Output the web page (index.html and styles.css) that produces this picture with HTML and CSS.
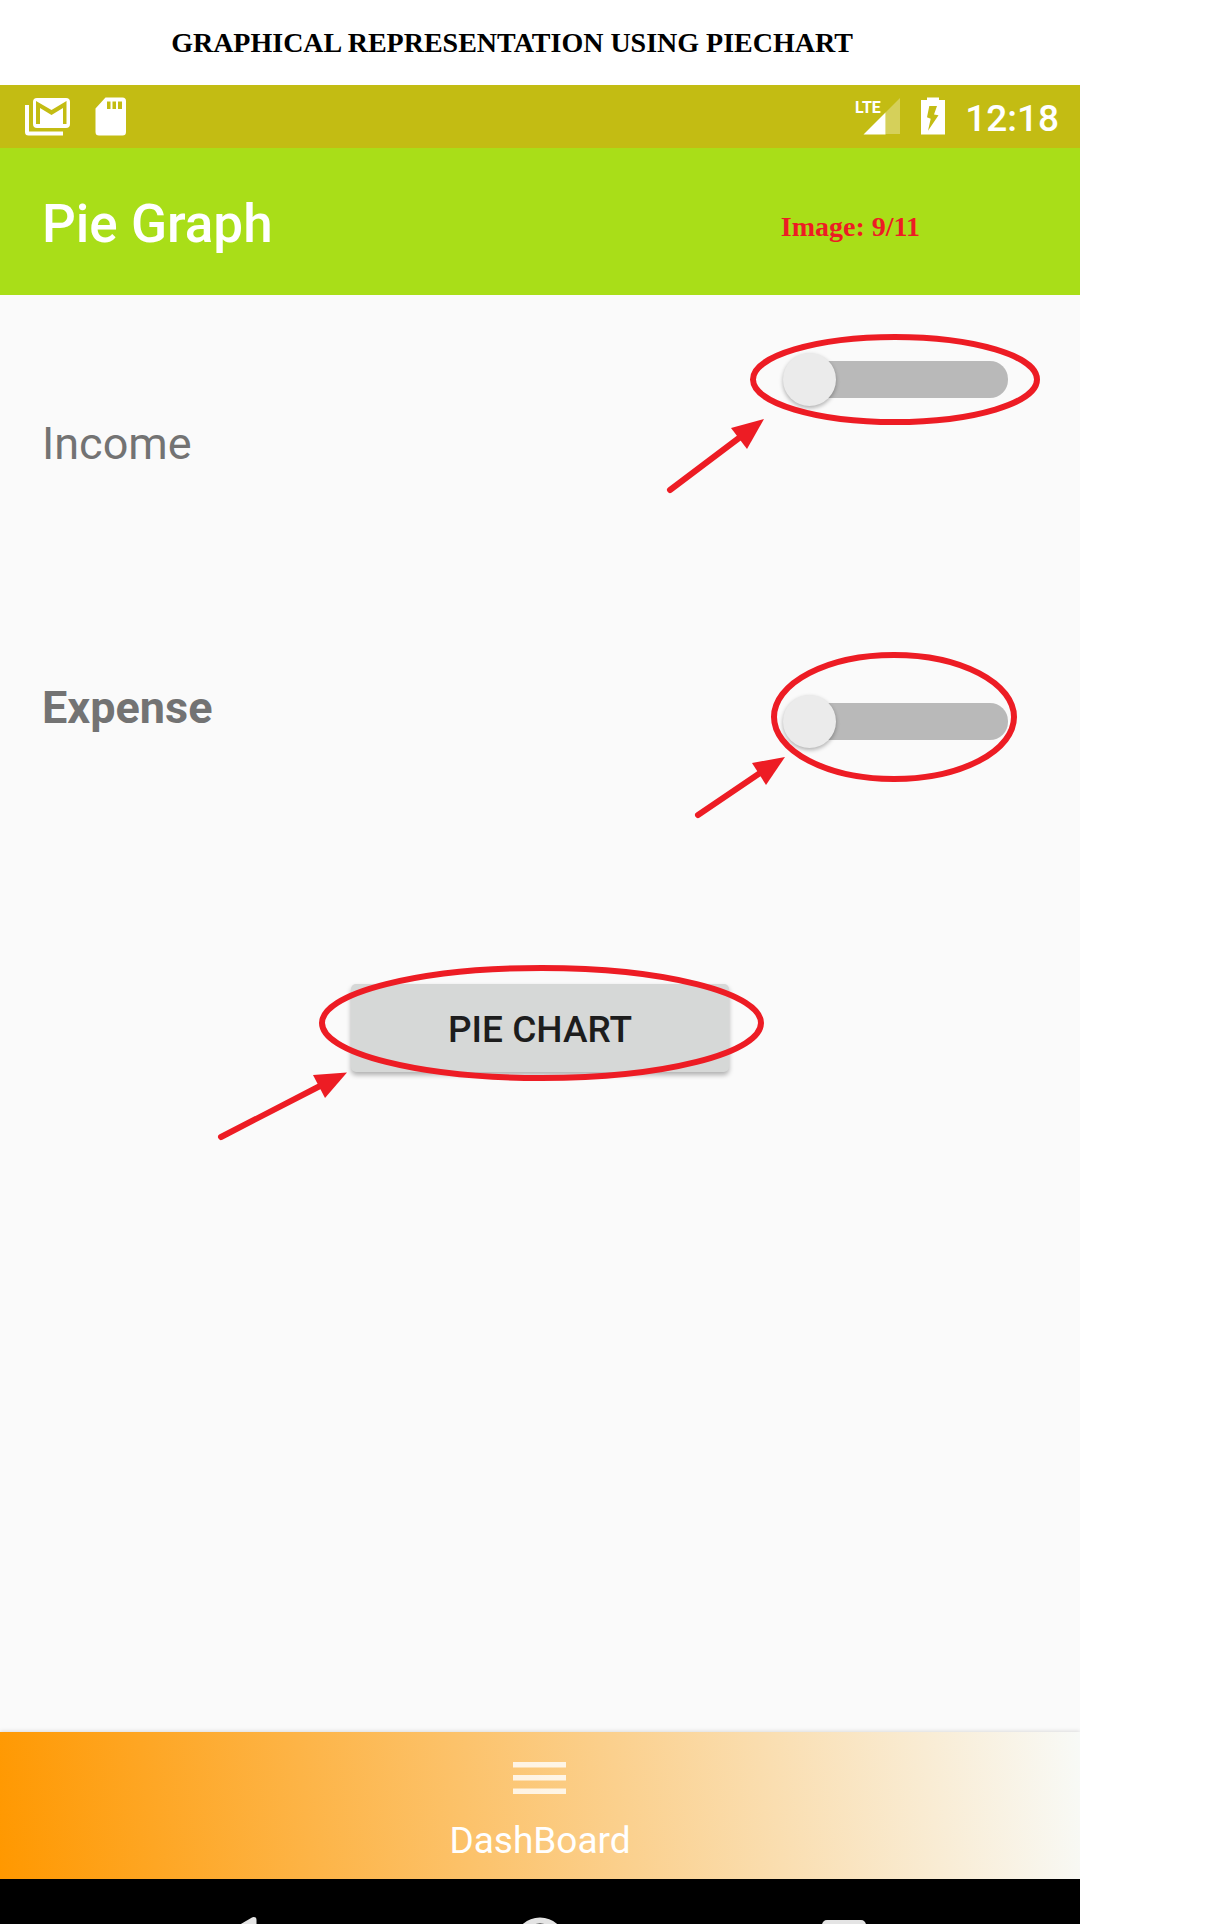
FILE: index.html
```html
<!DOCTYPE html>
<html lang="en">
<head>
<meta charset="utf-8">
<meta name="viewport" content="width=device-width, initial-scale=1">
<title>Pie Graph</title>
<link rel="stylesheet" href="styles.css">
</head>
<body>
<div class="page">
  <h1 class="page-title">GRAPHICAL REPRESENTATION USING PIECHART</h1>

  <div class="status-bar">
    <div class="notifications">
      <svg width="46" height="40" viewBox="0 0 46 40" aria-hidden="true">
        <path d="M0 8h4v26.500h34v4H3.500a3.500 3.500 0 0 1-3.500-3.500z" fill="#fff"/>
        <path fill-rule="evenodd" fill="#fff" d="M12 1h29a4 4 0 0 1 4 4v22a4 4 0 0 1-4 4h-29a4 4 0 0 1-4-4V5a4 4 0 0 1 4-4zM11 4v23h4V11l11.500 7L38 11v16h3.500V4L26.500 13z"/>
      </svg>
      <svg width="32" height="40" viewBox="0 0 32 40" aria-hidden="true">
        <path fill-rule="evenodd" fill="#fff" d="M10.500 0.500H27.500a3.500 3.500 0 0 1 3.500 3.500V35a3.500 3.500 0 0 1-3.500 3.500H4a3.500 3.500 0 0 1-3.500-3.500V11.500zM12 4.500v7.500h3.500V4.500zM17.500 4.500v7.500h3.500V4.500zM23 4.500v7.500h4V4.500z"/>
      </svg>
    </div>
    <div class="system-status">
      <svg width="46" height="40" viewBox="0 0 46 40" role="img" aria-label="LTE signal">
        <path d="M45 1v36H30.500V15.500z" fill="#fff" opacity=".3"/>
        <path d="M8.500 37.500L30.500 15.500V37.500z" fill="#fff"/>
        <text class="signal-text" x="0" y="16">LTE</text>
      </svg>
      <svg width="24" height="40" viewBox="0 0 24 40" aria-hidden="true">
        <path fill-rule="evenodd" fill="#fff" d="M6 0.500H18V3H24V37.500H0V3H6zM8.300 9L6 20.300L9.700 21.700L7 33.700L17.500 18.300L13 17.500L16 9z"/>
      </svg>
      <span class="clock">12:18</span>
    </div>
  </div>

  <header class="app-bar">
    <h2 class="app-title">Pie Graph</h2>
    <span class="image-count">Image: 9/11</span>
  </header>

  <main class="content">
    <div class="row">
      <label class="row-label" for="income">Income</label>
      <div class="switch-box">
        <input class="switch" type="checkbox" role="switch" id="income">
        <svg class="mark mark-income" width="390" height="170" viewBox="660 330 390 170" aria-hidden="true">
          <ellipse cx="895" cy="379.500" rx="142" ry="42.500"/>
          <path class="shaft" d="M670 490L739 438"/>
          <path class="head" d="M764 419L731 428L747 449z"/>
        </svg>
      </div>
    </div>
    <div class="row row-expense">
      <label class="row-label" for="expense">Expense</label>
      <div class="switch-box">
        <input class="switch" type="checkbox" role="switch" id="expense">
        <svg class="mark mark-expense" width="390" height="190" viewBox="660 645 390 190" aria-hidden="true">
          <ellipse cx="894" cy="717" rx="120" ry="62"/>
          <path class="shaft" d="M698 815L760 773"/>
          <path class="head" d="M785 757L752 763L766 785z"/>
        </svg>
      </div>
    </div>
    <div class="action">
      <button class="chart-button" type="button">PIE CHART</button>
      <svg class="mark mark-button" width="570" height="190" viewBox="210 960 570 190" aria-hidden="true">
        <ellipse cx="541.500" cy="1023" rx="219.500" ry="55"/>
        <path class="shaft" d="M221 1137L320 1086"/>
        <path class="head" d="M347 1072.500L313 1075L325 1098z"/>
      </svg>
    </div>
  </main>

  <nav class="bottom-bar">
    <a class="tab" href="#dashboard">
      <svg width="54" height="33" viewBox="0 0 54 33" aria-hidden="true">
        <path d="M0 0h53v5.500H0zM0 13h53v5.500H0zM0 26.500h53v5.500H0z" fill="#fff" opacity=".8"/>
      </svg>
      <span>DashBoard</span>
    </a>
  </nav>

  <div class="system-nav">
    <button class="key" type="button" aria-label="Back">
      <svg width="54" height="54" viewBox="0 0 54 54"><path d="M44.500 3L4 27L44.500 51z" fill="none" stroke="#e4e4e4" stroke-width="6" stroke-linejoin="round"/></svg>
    </button>
    <button class="key" type="button" aria-label="Home">
      <svg width="54" height="54" viewBox="0 0 54 54"><circle cx="27" cy="26.500" r="23" fill="none" stroke="#e4e4e4" stroke-width="6"/></svg>
    </button>
    <button class="key" type="button" aria-label="Recent apps">
      <svg width="54" height="54" viewBox="0 0 54 54"><rect x="8" y="6" width="38" height="38" rx="2" fill="none" stroke="#e4e4e4" stroke-width="6"/></svg>
    </button>
  </div>
</div>
</body>
</html>
```
FILE: styles.css
```css
* {
  box-sizing: border-box;
}

body {
  margin: 0;
  background: #fff;
  font-family: Roboto, "Liberation Sans", sans-serif;
}

.page {
  display: flex;
  flex-direction: column;
  max-width: 1080px;
  min-height: 100vh;
  overflow: hidden;
}

.page-title {
  margin: 0;
  padding: 0 56px 0 0;
  font: bold 28px/85px "Liberation Serif", serif;
  text-align: center;
  color: #000;
}

.status-bar {
  display: flex;
  align-items: center;
  justify-content: space-between;
  height: 63px;
  padding: 0 21px 0 25px;
  background: #c3bc13;
}

.notifications {
  display: flex;
  align-items: center;
  gap: 24px;
}

.system-status {
  display: flex;
  align-items: center;
  gap: 20px;
}

.signal-text {
  font: bold 16px Roboto, "Liberation Sans", sans-serif;
  fill: #fff;
}

.clock {
  padding-top: 4px;
  font-size: 37px;
  line-height: 44px;
  font-weight: 500;
  color: #fff;
}

.app-bar {
  display: flex;
  align-items: center;
  justify-content: space-between;
  height: 147px;
  padding: 4px 160px 0 42px;
  background: #a9de18;
}

.app-title {
  margin: 0;
  font-size: 53px;
  font-weight: 500;
  color: #fff;
}

.image-count {
  padding-top: 6px;
  font: bold 28px "Liberation Serif", serif;
  color: #ed1c24;
}

.content {
  flex: 1;
  padding-top: 58px;
  background: #fafafa;
}

.row {
  display: flex;
  align-items: flex-start;
  justify-content: space-between;
  padding: 0 72px 0 42px;
}

.row-label {
  padding-top: 64px;
  font-size: 45px;
  line-height: 53px;
  color: #737373;
}

.row-expense {
  margin-top: 211px;
}

.row-expense .row-label {
  padding-top: 0;
  font-weight: bold;
}

.row-expense .switch-box {
  margin-top: 14px;
}

.switch-box {
  position: relative;
  width: 225px;
  height: 53px;
}

.switch {
  appearance: none;
  display: flex;
  align-items: center;
  width: 100%;
  height: 100%;
  margin: 0;
  padding-left: 8px;
}

.switch::before {
  content: "";
  flex: 1;
  height: 37px;
  border-radius: 18px;
  background: #b9b9b9;
}

.switch::after {
  content: "";
  position: absolute;
  top: 0;
  left: 0;
  width: 53px;
  height: 53px;
  border-radius: 50%;
  background: #ebebeb;
  box-shadow: 0 2px 4px rgba(0, 0, 0, .3);
}

.switch:checked::after {
  left: auto;
  right: 0;
}

.mark {
  position: absolute;
  pointer-events: none;
  fill: none;
  stroke: #ed1c24;
  stroke-width: 6px;
}

.mark .shaft {
  stroke-linecap: round;
}

.mark .head {
  fill: #ed1c24;
  stroke: none;
}

.mark-income {
  left: -123px;
  top: -23px;
}

.mark-expense {
  left: -123px;
  top: -50px;
}

.mark-button {
  left: -141px;
  top: -24px;
}

.action {
  position: relative;
  width: 378px;
  margin: 236px auto 0;
}

.chart-button {
  display: block;
  width: 100%;
  height: 88px;
  padding: 2px 0 0;
  border: 0;
  border-radius: 5px;
  background: #d6d8d7;
  box-shadow: 0 3px 5px rgba(0, 0, 0, .3);
  font: 500 37px Roboto, sans-serif;
  color: #1d1d1d;
}

.bottom-bar {
  display: flex;
  justify-content: center;
  height: 147px;
  background: linear-gradient(83deg, #ff9800, #f8faf7);
  box-shadow: 0 -1px 4px rgba(0, 0, 0, .12);
}

.tab {
  display: flex;
  flex-direction: column;
  align-items: center;
  gap: 24px;
  padding-top: 30px;
  font-size: 37px;
  line-height: 44px;
  color: #fff;
  text-decoration: none;
}

.system-nav {
  position: relative;
  display: flex;
  justify-content: space-around;
  height: 45px;
  padding: 38px 84px 0;
  overflow: hidden;
  background: #000;
}

.key {
  height: 54px;
  padding: 0;
  border: 0;
  background: none;
}
```
